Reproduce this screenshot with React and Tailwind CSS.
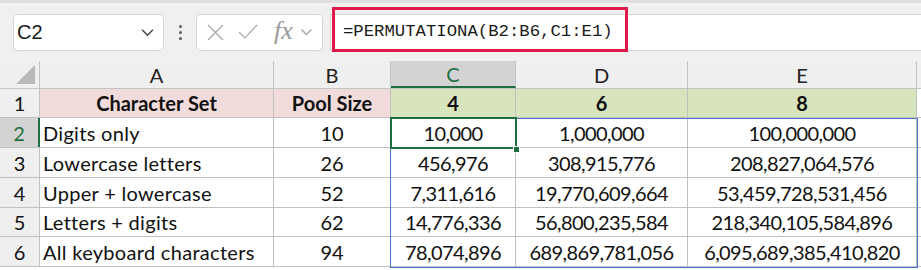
import React from 'react';

const cols = [
  { key: 'A', w: 'w-[234px]' },
  { key: 'B', w: 'w-[117px]' },
  { key: 'C', w: 'w-[125px]' },
  { key: 'D', w: 'w-[172px]' },
  { key: 'E', w: 'w-[229px]' },
];

const rows = [
  { n: 2, h: 'h-[30px]', a: 'Digits only', b: '10', c: '10,000', d: '1,000,000', e: '100,000,000' },
  { n: 3, h: 'h-[30px]', a: 'Lowercase letters', b: '26', c: '456,976', d: '308,915,776', e: '208,827,064,576' },
  { n: 4, h: 'h-[30px]', a: 'Upper + lowercase', b: '52', c: '7,311,616', d: '19,770,609,664', e: '53,459,728,531,456' },
  { n: 5, h: 'h-[29px]', a: 'Letters + digits', b: '62', c: '14,776,336', d: '56,800,235,584', e: '218,340,105,584,896' },
  { n: 6, h: 'h-[30px]', a: 'All keyboard characters', b: '94', c: '78,074,896', d: '689,869,781,056', e: '6,095,689,385,410,820' },
];

function Chevron({ className }) {
  return (
    <svg viewBox="0 0 12 8" className={className} fill="none" stroke="currentColor" strokeWidth="1.4">
      <path d="M1 1.5l5 5 5-5" />
    </svg>
  );
}

function Toolbar() {
  return (
    <div className="relative h-[61px] bg-[#f0f0f0] border-t-[3px] border-[#dedede] flex items-center">
      <div className="ml-[13px] w-[151px] h-[37px] bg-white border border-[#d6d6d6] rounded-[5px] flex items-center justify-between pl-[3px] pr-[9px]">
        <span className="text-[20px] text-[#1a1a1a] font-['Liberation_Sans',sans-serif]">C2</span>
        <Chevron className="w-[13px] h-[9px] text-[#444]" />
      </div>
      <div className="w-[32px] flex flex-col items-center gap-[3px]">
        <span className="w-[3px] h-[3px] rounded-full bg-[#5a5a5a]" />
        <span className="w-[3px] h-[3px] rounded-full bg-[#5a5a5a]" />
        <span className="w-[3px] h-[3px] rounded-full bg-[#5a5a5a]" />
      </div>
      <div className="w-[127px] h-[37px] bg-white border border-[#d6d6d6] rounded-[5px] flex items-center text-[#a8a8a8]">
        <svg viewBox="0 0 16 16" className="ml-[10px] w-[17px] h-[17px]" stroke="currentColor" strokeWidth="1.2">
          <path d="M1 1l14 14M15 1L1 15" />
        </svg>
        <svg viewBox="0 0 20 16" className="ml-[14px] w-[20px] h-[16px]" fill="none" stroke="currentColor" strokeWidth="1.2">
          <path d="M1 8l6 6L19 1" />
        </svg>
        <span className="ml-[16px] text-[26px] italic leading-none font-['Liberation_Serif',serif] text-[#999] -mt-[3px]">fx</span>
        <Chevron className="ml-[7px] w-[13px] h-[8px]" />
      </div>
      <div className="ml-[7px] flex-1 h-[37px] bg-white border-y border-l border-[#d6d6d6] flex items-center pl-[12px]">
        <span className="text-[17.3px] text-[#1a1a1a] font-['Liberation_Mono',monospace]">=PERMUTATIONA(B2:B6,C1:E1)</span>
      </div>
      <div className="absolute left-[332px] top-[4px] w-[296px] h-[45px] border-[3px] border-[#e0194b]" />
    </div>
  );
}

function Grid() {
  return (
    <div className="relative font-['Lato',sans-serif] text-[#111]">
      <div className="flex h-[28px] bg-[#efefef] border-b border-[#c4c4c4]">
        <div className="w-[40px] border-r border-[#c4c4c4] relative">
          <div className="absolute right-[4px] bottom-[4px] w-0 h-0 border-l-[19px] border-l-transparent border-b-[19px] border-b-[#b9b9b9]" />
        </div>
        {cols.map((c) => (
          <div
            key={c.key}
            className={`${c.w} border-r border-[#c4c4c4] flex items-center justify-center text-[20px] ${
              c.key === 'C' ? 'bg-[#d3d3d3] text-[#1e6e42] border-b-2 border-b-[#1e6e42]' : 'text-[#222]'
            }`}
          >
            {c.key}
          </div>
        ))}
        <div className="flex-1" />
      </div>

      <div className="flex h-[29px] border-b border-[#c0c0c0] text-[20px] font-bold">
        <div className="w-[40px] bg-[#efefef] border-r border-[#c4c4c4] flex items-center justify-center font-normal">1</div>
        <div className="w-[234px] bg-[#f2dcdb] border-r border-[#c0c0c0] flex items-center justify-center">Character Set</div>
        <div className="w-[117px] bg-[#f2dcdb] border-r border-[#c0c0c0] flex items-center justify-center">Pool Size</div>
        <div className="w-[125px] bg-[#d8e4bc] border-r border-[#c0c0c0] flex items-center justify-center">4</div>
        <div className="w-[172px] bg-[#d8e4bc] border-r border-[#c0c0c0] flex items-center justify-center">6</div>
        <div className="w-[229px] bg-[#d8e4bc] border-r border-[#c0c0c0] flex items-center justify-center">8</div>
        <div className="flex-1 bg-white" />
      </div>

      {rows.map((r) => (
        <div key={r.n} className={`flex ${r.h} border-b border-[#c0c0c0] text-[20px] bg-white`}>
          <div
            className={`w-[40px] flex items-center justify-center ${
              r.n === 2
                ? 'bg-[#d3d3d3] text-[#1e6e42] border-r-2 border-[#1e6e42]'
                : 'bg-[#efefef] border-r border-[#c4c4c4]'
            }`}
          >
            {r.n}
          </div>
          <div className="w-[234px] border-r border-[#c0c0c0] flex items-center pl-[3px] tracking-[0.3px]">{r.a}</div>
          <div className="w-[117px] border-r border-[#c0c0c0] flex items-center justify-center">{r.b}</div>
          <div className="w-[125px] border-r border-[#c0c0c0] flex items-center justify-center tracking-[-0.6px]">{r.c}</div>
          <div className="w-[172px] border-r border-[#c0c0c0] flex items-center justify-center tracking-[-0.6px]">{r.d}</div>
          <div className="w-[229px] border-r border-[#c0c0c0] flex items-center justify-center tracking-[-0.6px]">{r.e}</div>
          <div className="flex-1" />
        </div>
      ))}

      <div className="absolute left-[390px] top-[57px] w-[528px] h-[150px] border-[1.5px] border-[#4a78c8] pointer-events-none" />
      <div className="absolute left-[390px] top-[56px] w-[127px] h-[32px] border-2 border-[#1e6e42] pointer-events-none" />
      <div className="absolute left-[513px] top-[85px] w-[7px] h-[7px] bg-[#1e6e42] border border-white pointer-events-none" />
    </div>
  );
}

export default function App() {
  return (
    <div className="w-[921px] h-[270px] overflow-hidden bg-white">
      <Toolbar />
      <Grid />
    </div>
  );
}
